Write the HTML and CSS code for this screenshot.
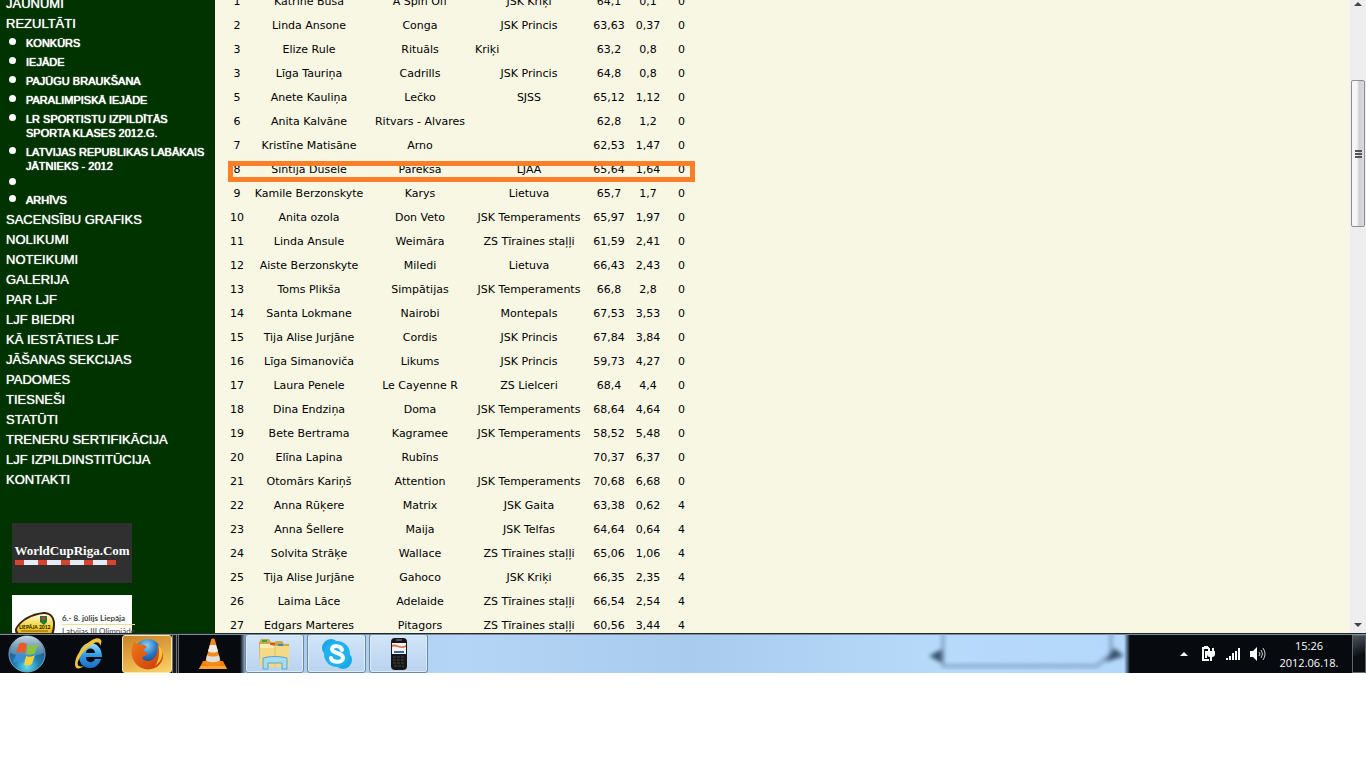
FILE: index.html
```html
<!DOCTYPE html>
<html lang="lv">
<head>
  <meta charset="UTF-8">
  <meta name="viewport" content="width=device-width, initial-scale=1.0">
  <title>LJF - Rezultāti</title>
  <link rel="stylesheet" href="styles.css">
</head>
<body>
  <div class="browser">
    <aside class="sidebar">
      <nav>
        <ul class="menu">
          <li><a href="#">JAUNUMI</a></li>
          <li><a href="#">REZULTĀTI</a>
            <ul class="submenu">
              <li><a href="#">KONKŪRS</a></li>
              <li><a href="#">IEJĀDE</a></li>
              <li><a href="#">PAJŪGU BRAUKŠANA</a></li>
              <li><a href="#">PARALIMPISKĀ IEJĀDE</a></li>
              <li><a href="#">LR SPORTISTU IZPILDĪTĀS<br>SPORTA KLASES 2012.G.</a></li>
              <li><a href="#">LATVIJAS REPUBLIKAS LABĀKAIS<br>JĀTNIEKS - 2012</a></li>
              <li class="blank"></li>
              <li><a href="#">ARHĪVS</a></li>
            </ul>
          </li>
          <li><a href="#">SACENSĪBU GRAFIKS</a></li>
          <li><a href="#">NOLIKUMI</a></li>
          <li><a href="#">NOTEIKUMI</a></li>
          <li><a href="#">GALERIJA</a></li>
          <li><a href="#">PAR LJF</a></li>
          <li><a href="#">LJF BIEDRI</a></li>
          <li><a href="#">KĀ IESTĀTIES LJF</a></li>
          <li><a href="#">JĀŠANAS SEKCIJAS</a></li>
          <li><a href="#">PADOMES</a></li>
          <li><a href="#">TIESNEŠI</a></li>
          <li><a href="#">STATŪTI</a></li>
          <li><a href="#">TRENERU SERTIFIKĀCIJA</a></li>
          <li><a href="#">LJF IZPILDINSTITŪCIJA</a></li>
          <li><a href="#">KONTAKTI</a></li>
        </ul>
      </nav>
      <a class="banner banner-cup" href="#">
        <span>WorldCupRiga.Com</span>
        <span class="pole"></span>
      </a>
      <a class="banner banner-liepaja" href="#">
        <svg width="42" height="42" viewBox="0 0 42 42">
          <defs>
            <linearGradient id="gold" x1="0" y1="0" x2="0" y2="1">
              <stop offset="0" stop-color="#fffbe0"/>
              <stop offset=".5" stop-color="#f5cf20"/>
              <stop offset="1" stop-color="#d89000"/>
            </linearGradient>
          </defs>
          <path d="M1 17C5 8 17 1 30 0c7 0 11 5 11 12s-2 14-7 18S0 30 1 17z" fill="#3a2408"/>
          <path d="M3 17C7 9 18 3 30 2c6 0 9 4 9 10s-2 12-6 16S3 27 3 17z" fill="url(#gold)"/>
          <path d="M26 4h7v6l-3 3-4-3z" fill="#1c7a3c"/>
          <path d="M28 5h3v3h-3z" fill="#d33"/>
          <text x="5" y="17" font-size="5" font-weight="bold" font-family="Lato" fill="#111">LIEPĀJA 2012</text>
          <path d="M7 19h27" stroke="#8a5d00"/>
        </svg>
        <span class="liepaja-text"><b>6.- 8. jūlijs Liepāja</b>Latvijas III Olimpiāde</span>
      </a>
    </aside>

    <main class="content">
      <table class="results">
        <colgroup>
          <col class="c-place"><col class="c-rider"><col class="c-horse"><col class="c-club"><col class="c-time"><col class="c-pen"><col class="c-faults">
        </colgroup>
        <tbody>
          <tr><td>1</td><td>Katrīne Buša</td><td>A Spin Off</td><td>JSK Kriķi</td><td>64,1</td><td>0,1</td><td>0</td></tr>
          <tr><td>2</td><td>Linda Ansone</td><td>Conga</td><td>JSK Princis</td><td>63,63</td><td>0,37</td><td>0</td></tr>
          <tr><td>3</td><td>Elize Rule</td><td>Rituāls</td><td class="left">Kriķi</td><td>63,2</td><td>0,8</td><td>0</td></tr>
          <tr><td>3</td><td>Līga Tauriņa</td><td>Cadrills</td><td>JSK Princis</td><td>64,8</td><td>0,8</td><td>0</td></tr>
          <tr><td>5</td><td>Anete Kauliņa</td><td>Lečko</td><td>SJSS</td><td>65,12</td><td>1,12</td><td>0</td></tr>
          <tr><td>6</td><td>Anita Kalvāne</td><td>Ritvars - Alvares</td><td></td><td>62,8</td><td>1,2</td><td>0</td></tr>
          <tr><td>7</td><td>Kristīne Matisāne</td><td>Arno</td><td></td><td>62,53</td><td>1,47</td><td>0</td></tr>
          <tr class="marked"><td>8</td><td>Sintija Dušele</td><td>Pareksa</td><td>LJAA</td><td>65,64</td><td>1,64</td><td>0</td></tr>
          <tr><td>9</td><td>Kamile Berzonskyte</td><td>Karys</td><td>Lietuva</td><td>65,7</td><td>1,7</td><td>0</td></tr>
          <tr><td>10</td><td>Anita ozola</td><td>Don Veto</td><td>JSK Temperaments</td><td>65,97</td><td>1,97</td><td>0</td></tr>
          <tr><td>11</td><td>Linda Ansule</td><td>Weimāra</td><td>ZS Tīraines staļļi</td><td>61,59</td><td>2,41</td><td>0</td></tr>
          <tr><td>12</td><td>Aiste Berzonskyte</td><td>Miledi</td><td>Lietuva</td><td>66,43</td><td>2,43</td><td>0</td></tr>
          <tr><td>13</td><td>Toms Plikša</td><td>Simpātijas</td><td>JSK Temperaments</td><td>66,8</td><td>2,8</td><td>0</td></tr>
          <tr><td>14</td><td>Santa Lokmane</td><td>Nairobi</td><td>Montepals</td><td>67,53</td><td>3,53</td><td>0</td></tr>
          <tr><td>15</td><td>Tija Alise Jurjāne</td><td>Cordis</td><td>JSK Princis</td><td>67,84</td><td>3,84</td><td>0</td></tr>
          <tr><td>16</td><td>Līga Simanoviča</td><td>Likums</td><td>JSK Princis</td><td>59,73</td><td>4,27</td><td>0</td></tr>
          <tr><td>17</td><td>Laura Penele</td><td>Le Cayenne R</td><td>ZS Lielceri</td><td>68,4</td><td>4,4</td><td>0</td></tr>
          <tr><td>18</td><td>Dina Endziņa</td><td>Doma</td><td>JSK Temperaments</td><td>68,64</td><td>4,64</td><td>0</td></tr>
          <tr><td>19</td><td>Bete Bertrama</td><td>Kagramee</td><td>JSK Temperaments</td><td>58,52</td><td>5,48</td><td>0</td></tr>
          <tr><td>20</td><td>Elīna Lapina</td><td>Rubīns</td><td></td><td>70,37</td><td>6,37</td><td>0</td></tr>
          <tr><td>21</td><td>Otomārs Kariņš</td><td>Attention</td><td>JSK Temperaments</td><td>70,68</td><td>6,68</td><td>0</td></tr>
          <tr><td>22</td><td>Anna Rūķere</td><td>Matrix</td><td>JSK Gaita</td><td>63,38</td><td>0,62</td><td>4</td></tr>
          <tr><td>23</td><td>Anna Šellere</td><td>Maija</td><td>JSK Telfas</td><td>64,64</td><td>0,64</td><td>4</td></tr>
          <tr><td>24</td><td>Solvita Strāķe</td><td>Wallace</td><td>ZS Tīraines staļļi</td><td>65,06</td><td>1,06</td><td>4</td></tr>
          <tr><td>25</td><td>Tija Alise Jurjāne</td><td>Gahoco</td><td>JSK Kriķi</td><td>66,35</td><td>2,35</td><td>4</td></tr>
          <tr><td>26</td><td>Laima Lāce</td><td>Adelaide</td><td>ZS Tīraines staļļi</td><td>66,54</td><td>2,54</td><td>4</td></tr>
          <tr><td>27</td><td>Edgars Marteres</td><td>Pitagors</td><td>ZS Tīraines staļļi</td><td>60,56</td><td>3,44</td><td>4</td></tr>
        </tbody>
      </table>
    </main>

    <div class="scrollbar">
      <svg class="arrow" width="8" height="4" viewBox="0 0 8 4"><path d="M4 0l4 4H0z" fill="#444"/></svg>
      <div class="thumb"><i></i><i></i><i></i></div>
      <svg class="arrow" width="8" height="4" viewBox="0 0 8 4"><path d="M4 4l4-4H0z" fill="#444"/></svg>
    </div>
  </div>

  <footer class="taskbar">
    <div class="launcher">
      <button class="start" aria-label="Start">
        <svg width="38" height="38" viewBox="0 0 38 38">
          <defs>
            <radialGradient id="orb" cx="50%" cy="85%" r="75%">
              <stop offset="0" stop-color="#5fe0f5"/>
              <stop offset=".45" stop-color="#1d7fb4"/>
              <stop offset="1" stop-color="#204e78"/>
            </radialGradient>
            <linearGradient id="shine" x1="0" y1="0" x2="0" y2="1">
              <stop offset="0" stop-color="#e4f0f6" stop-opacity=".85"/>
              <stop offset="1" stop-color="#9cc4dc" stop-opacity=".3"/>
            </linearGradient>
          </defs>
          <circle cx="19" cy="19" r="18" fill="url(#orb)" stroke="#7fa5be"/>
          <path d="M2 18a17 17 0 0 1 34 0c-9 4-25 4-34 0z" fill="url(#shine)"/>
          <path d="M11 9c3-2 5-1 8 0l-2 9c-3-1-6-1-9 0z" fill="#ef5a24"/>
          <path d="M20 10c3 1 6 1 10-1l-3 9c-3 2-6 2-9 1z" fill="#8cc43e"/>
          <path d="M8 20c3-2 6-1 9 0l-2 8c-3-2-6-2-10 0z" fill="#3d8ed8"/>
          <path d="M18 21c3 1 6 1 9-1l-3 9c-3 2-5 2-8 1z" fill="#fcd03a"/>
        </svg>
      </button>
      <button class="pin" aria-label="Internet Explorer">
        <svg width="34" height="34" viewBox="0 0 34 34">
          <defs>
            <linearGradient id="ie" x1="0" y1="0" x2="0" y2="1">
              <stop offset="0" stop-color="#9be2ff"/>
              <stop offset=".5" stop-color="#2d9ae6"/>
              <stop offset="1" stop-color="#1b6fc8"/>
            </linearGradient>
          </defs>
          <path fill-rule="evenodd" d="M18 6C25 6 30 11 30 20H14c0 6 7 7 9 2h6c-2 6-6 9-11 9C11 31 7 26 7 19S12 6 18 6zm-4 10h9c0-6-9-6-9 0z" fill="url(#ie)"/>
          <path d="M28 9c4-7-1-10-8-6C11 8 3 19 3 27c0 6 5 5 9 2-7 2-8-2-4-9C13 11 28-1 28 9z" fill="#f6c335"/>
        </svg>
      </button>
      <button class="firefox" aria-label="Firefox">
        <svg width="34" height="34" viewBox="0 0 34 34">
          <defs>
            <radialGradient id="globe" cx="45%" cy="25%" r="75%">
              <stop offset="0" stop-color="#8fd0f5"/>
              <stop offset=".5" stop-color="#2a78c8"/>
              <stop offset="1" stop-color="#123a7c"/>
            </radialGradient>
            <linearGradient id="fox" x1="0" y1="0" x2="1" y2="1">
              <stop offset="0" stop-color="#f07818"/>
              <stop offset="1" stop-color="#c93a0c"/>
            </linearGradient>
          </defs>
          <circle cx="18" cy="15" r="13" fill="url(#globe)"/>
          <path d="M4 5c2 0 3 2 5 3 3-1 6 0 8 2l-4 3c1 2 3 2 5 3-1 3-5 3-6 5 3 4 9 4 12 0 4-4 4-10 3-13 7 7 8 14 2 20-6 6-17 6-23-1C0 20 1 12 4 5z" fill="url(#fox)"/>
          <path d="M28 7c6 7 6 16-3 22 4-6 5-14 3-22z" fill="#ffc53a"/>
        </svg>
      </button>
      <span class="stack"></span>
      <button class="pin vlc" aria-label="VLC">
        <svg width="28" height="32" viewBox="0 0 28 32">
          <path d="M4 23h20l4 8H0z" fill="#f08010"/>
          <path d="M2 28h24l2 3H0z" fill="#ffa530"/>
          <path d="M12 2c0-2 4-2 4 0l6 23c-3 4-13 4-16 0z" fill="#f58a1c"/>
          <path d="M11 7h6l2 6c-2 2-8 2-10 0z" fill="#ececec"/>
          <path d="M8 17c3 2 9 2 12 0l1 5c-3 3-11 3-14 0z" fill="#dedede"/>
        </svg>
      </button>
    </div>
    <div class="windows">
      <button class="window" aria-label="Explorer">
        <svg width="34" height="32" viewBox="0 0 34 32">
          <path d="M1 5l2-4h8l2 3h4l1-1h6l2 3h5v23H2z" fill="#cda848"/>
          <path d="M2 6h11l2 2h16v20H2z" fill="#fbedb4"/>
          <path d="M2 10h13l2-2h14v21H2z" fill="#f3da83"/>
          <path d="M17 9v20" stroke="#dfc066"/>
          <path d="M4 3h5" stroke="#3ba53b" stroke-width="2"/>
          <path d="M12 6h5" stroke="#d8542c" stroke-width="2"/>
          <path d="M20 7h5" stroke="#3d86c8" stroke-width="2"/>
          <path d="M5 31V20c8-2 16-2 24 0v11h-5v-6H10v6z" fill="#a6dcf2" stroke="#5ba6cf"/>
        </svg>
      </button>
      <button class="window" aria-label="Skype">
        <svg width="32" height="32" viewBox="0 0 32 32">
          <circle cx="10" cy="10" r="9" fill="#18a9e6"/>
          <circle cx="22" cy="22" r="9" fill="#18a9e6"/>
          <circle cx="16" cy="16" r="13" fill="#1fb2ee"/>
          <path d="M21 12c-1-5-10-5-10-1 0 5 11 3 11 9 0 5-11 5-12 0" fill="none" stroke="#fff" stroke-width="4" stroke-linecap="round"/>
        </svg>
      </button>
      <button class="window" aria-label="Phone">
        <svg width="18" height="32" viewBox="0 0 18 32">
          <rect x="1" y="0" width="16" height="32" rx="4" fill="#161616"/>
          <path d="M6 2h6" stroke="#888"/>
          <rect x="2" y="5" width="14" height="11" fill="#f4f4f4"/>
          <path d="M2 7c5-2 8 4 14 0v2c-6 3-9-2-14 0z" fill="#e0704a"/>
          <path d="M4 14h10" stroke="#3467b0" stroke-width="2"/>
          <path d="M3 19h12M3 22h12M3 25h12M4 28h10" stroke="#444" stroke-dasharray="3 1"/>
        </svg>
      </button>
      <svg class="glass" width="200" height="38" viewBox="0 0 200 38">
        <defs><filter id="soft"><feGaussianBlur stdDeviation="2"/></filter></defs>
        <g filter="url(#soft)">
          <path d="M16 -4v36h154l14-12V-4" fill="none" stroke="#7d9dc0" stroke-width="3"/>
          <path d="M2 22l13-7v14z" fill="#38506c"/>
          <path d="M197 22l-10-8-9 14z" fill="#38506c"/>
        </g>
      </svg>
    </div>
    <div class="tray">
      <svg class="more" width="8" height="4" viewBox="0 0 8 4"><path d="M4 0l4 4H0z" fill="#fff"/></svg>
      <svg width="14" height="16" viewBox="0 0 14 16">
        <path d="M7 2H5V1H3v1H1v12h6" fill="none" stroke="#fff" stroke-width="2"/>
        <path d="M3 5h2v7H3z" fill="#fff"/>
        <path d="M7 2v4M11 2v4" stroke="#fff" stroke-width="2"/>
        <path d="M5 5h8v3c0 2-1 3-3 3v4H8v-4C6 11 5 10 5 8z" fill="#fff"/>
      </svg>
      <svg width="14" height="12" viewBox="0 0 14 12"><path d="M0 10h2v2H0zM3 8h2v4H3zM6 5h2v7H6zM9 3h2v9H9zM12 0h2v12h-2z" fill="#fff"/></svg>
      <svg width="16" height="14" viewBox="0 0 16 14">
        <path d="M0 4h3l4-4v14l-4-4H0z" fill="#fff"/>
        <path d="M9 5q2 2 0 4M11 3q3 4 0 8M13 1q4 6 0 12" fill="none" stroke="#ccc"/>
      </svg>
      <time class="clock" datetime="2012-06-18T15:26">15:26<br>2012.06.18.</time>
      <button class="show-desktop" aria-label="Show desktop"></button>
    </div>
  </footer>
</body>
</html>
```
FILE: styles.css
```css
body {
  margin: 0;
  background: #fff;
  font-family: "Liberation Sans", Arial, sans-serif;
}
ul {
  list-style: none;
  margin: 0;
  padding: 0;
}
a {
  color: inherit;
  text-decoration: none;
}
button {
  padding: 0;
  border: none;
  background: none;
}
svg {
  display: block;
  flex: none;
}

/* browser window */
.browser {
  display: flex;
  height: 633px;
  overflow: hidden;
  background: #f8f7e4;
}
.sidebar {
  flex: none;
  width: 215px;
  background: #003300;
  color: #fff;
}
.menu {
  margin-top: -6px;
  padding-left: 6px;
  font-size: 13px;
  line-height: 20px;
  text-shadow: 0 0 1px #fff;
}
.menu a {
  display: block;
}
.submenu {
  padding: 2px 0 3px 3px;
  font-size: 11px;
  line-height: 14px;
  text-shadow: 0 0 1px #fff, 0 0 1px #fff;
}
.submenu li {
  display: flex;
  gap: 10px;
}
.submenu li + li {
  margin-top: 5px;
}
.submenu li::before {
  content: "";
  width: 7px;
  height: 7px;
  margin-top: 2px;
  border-radius: 50%;
  background: #fff;
}
.submenu .blank {
  height: 10px;
}
.submenu .blank::before {
  margin-top: 0;
}
.banner {
  display: flex;
  width: 120px;
  height: 60px;
  margin: 0 0 12px 12px;
}
.banner-cup {
  flex-direction: column;
  justify-content: center;
  margin-top: 33px;
  background: #303030;
  font: bold 13px/18px "Liberation Serif", serif;
  text-align: center;
}
.pole {
  height: 5px;
  margin: 0 16px 0 3px;
  background: repeating-linear-gradient(90deg, #d8432f 0 9px, #e6ecf6 9px 23px);
}
.banner-liepaja {
  box-sizing: border-box;
  gap: 6px;
  padding: 17px 0 0 2px;
  background: #fff;
  color: #444;
}
.liepaja-text {
  font: 8px/12px Lato, sans-serif;
  white-space: nowrap;
}
.liepaja-text b {
  display: block;
  border-bottom: 1px solid #eedc9a;
}

/* results */
.content {
  flex: 1;
  padding-left: 13px;
}
.results {
  width: 467px;
  margin-top: -10px;
  table-layout: fixed;
  border-collapse: collapse;
  font: 11px/24px Verdana, "DejaVu Sans", sans-serif;
  color: #000;
  text-align: center;
  white-space: nowrap;
}
.results td {
  height: 24px;
  padding: 0;
}
.results .left {
  padding-left: 7px;
  text-align: left;
}
.c-place { width: 18px; }
.c-rider { width: 126px; }
.c-horse { width: 96px; }
.c-club { width: 122px; }
.c-time { width: 38px; }
.c-pen { width: 40px; }
.c-faults { width: 27px; }
.marked {
  position: relative;
}
.marked td:first-child::after {
  content: "";
  position: absolute;
  box-sizing: border-box;
  top: 3px;
  left: 0;
  width: 100%;
  height: 21px;
  border: 5px solid #fc7f27;
}

/* scrollbar */
.scrollbar {
  display: flex;
  flex-direction: column;
  align-items: center;
  box-sizing: border-box;
  width: 16px;
  padding: 2px 0 6px;
  background: #eeeef0;
}
.thumb {
  display: flex;
  flex-direction: column;
  align-items: center;
  justify-content: center;
  gap: 1px;
  box-sizing: border-box;
  width: 14px;
  height: 147px;
  margin: 74px 0 auto;
  border: 1px solid #8e8e94;
  border-radius: 2px;
  background: linear-gradient(90deg, #f6f6f6 0 40%, #cfcfd4 60%, #dcdce0);
}
.thumb i {
  width: 7px;
  height: 2px;
  background: #55555c;
}

/* taskbar */
.taskbar {
  display: flex;
  box-sizing: border-box;
  height: 40px;
  border-top: 1px solid #20282c;
  background: #070b10;
  box-shadow: inset 0 1px #7d8c92;
}
.launcher {
  display: flex;
  align-items: center;
  width: 240px;
}
.start {
  width: 54px;
  padding-left: 8px;
}
.pin {
  width: 68px;
  padding-left: 18px;
}
.firefox {
  display: flex;
  align-items: center;
  justify-content: center;
  box-sizing: border-box;
  width: 50px;
  height: 38px;
  border: 1px solid #ffe9a8;
  border-radius: 3px;
  background: linear-gradient(165deg, #c98328, #e0a440 45%, #fbd468);
}
.stack {
  box-sizing: border-box;
  width: 7px;
  height: 38px;
  border: solid #6c7276;
  border-width: 0 1px;
  background: linear-gradient(90deg, #15191d 0 3px, #6c7276 3px 4px, #15191d 4px);
}
.vlc {
  width: 61px;
  padding-left: 20px;
}
.windows {
  display: flex;
  flex: 1;
  gap: 3px;
  padding: 0 3px 0 5px;
  background: linear-gradient(90deg, #070b10, #a9c9ea 6px, #b4d5f6 220px, #a9cbed 450px, #b7dafb 700px, #b4d8fb calc(100% - 6px), #070b10);
  box-shadow: inset 0 1px #7d8c92;
}
.window {
  display: flex;
  align-items: center;
  justify-content: center;
  box-sizing: border-box;
  width: 59px;
  height: 39px;
  border: 1px solid #6d88a6;
  border-radius: 3px;
  background: linear-gradient(#d3e5f8, #b8d3f0);
  box-shadow: inset 0 0 0 1px #dcecfb;
}
.glass {
  margin-left: auto;
}
.tray {
  display: flex;
  align-items: center;
  gap: 10px;
  box-sizing: border-box;
  width: 236px;
  padding-left: 50px;
}
.more {
  margin-right: 4px;
}
.clock {
  flex: 1;
  color: #fff;
  font: 11px/17px "Open Sans", "Noto Sans", sans-serif;
  text-align: center;
}
.show-desktop {
  flex: none;
  box-sizing: border-box;
  width: 14px;
  height: 38px;
  border: 1px solid #5f676c;
  background: linear-gradient(160deg, #4c5459, #0b0f13 55%);
}
```
